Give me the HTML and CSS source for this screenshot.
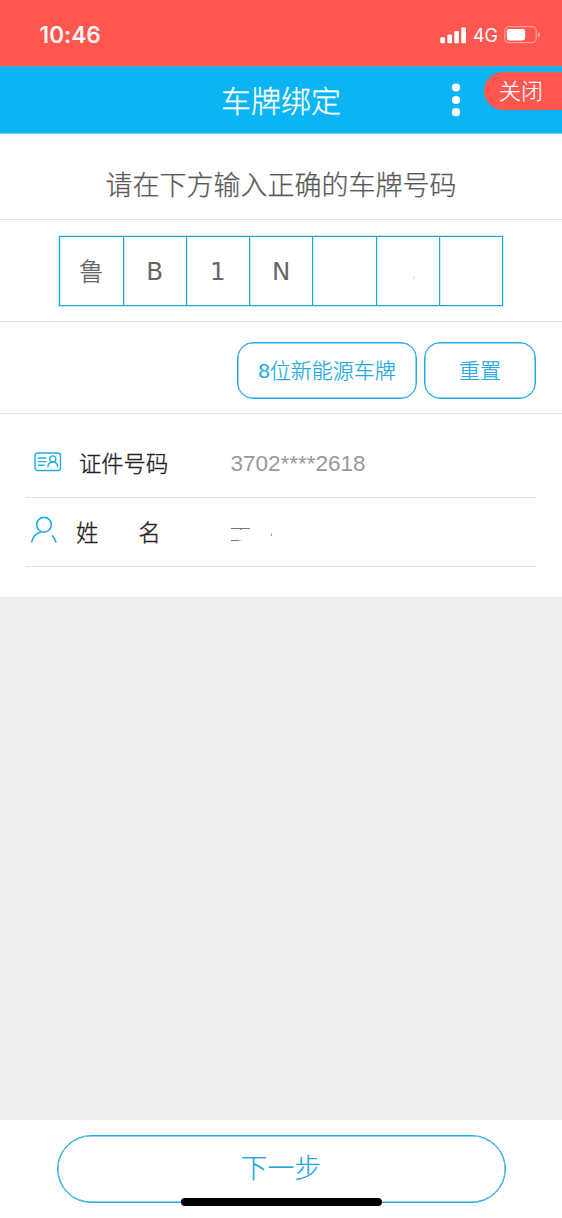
FILE: index.html
```html
<!DOCTYPE html>
<html lang="zh-CN">
<head>
<meta charset="utf-8">
<title>车牌绑定</title>
<link rel="stylesheet" href="styles.css">
</head>
<body>
<div class="app">
  <div class="status">
    <span class="time">10:46</span>
    <span class="indicators">
      <svg class="signal" width="27" height="17" viewBox="0 0 27 17" fill="#fff"><rect x="0.3" y="10.2" width="4.7" height="6" rx="1.3"/><rect x="7.3" y="7.5" width="4.7" height="8.7" rx="1.3"/><rect x="14.3" y="4" width="4.7" height="12.2" rx="1.3"/><rect x="21.3" y="0.5" width="4.7" height="15.7" rx="1.3"/></svg>
      <span class="network">4G</span>
      <svg class="battery" width="37" height="18" viewBox="0 0 37 18"><rect x="0.7" y="0.7" width="31.6" height="16" rx="4.5" fill="none" stroke="#ff9a97" stroke-width="1.3"/><rect x="2.8" y="2.9" width="18.4" height="11.6" rx="2.4" fill="#fff"/><path d="M34 6.2q2 .8 2 2.5t-2 2.5z" fill="#ffb0ad"/></svg>
    </span>
  </div>
  <header class="header">
    <h1 class="title">车牌绑定</h1>
    <svg class="more" width="10" height="34" viewBox="0 0 10 34" fill="#fff"><circle cx="5" cy="4.5" r="4.1"/><circle cx="5" cy="17" r="4.1"/><circle cx="5" cy="29.2" r="4.1"/></svg>
    <button class="close">关闭</button>
  </header>
  <p class="prompt">请在下方输入正确的车牌号码</p>
  <section class="plate-section">
    <div class="plate">
      <span class="cell cjk">鲁</span><span class="cell">B</span><span class="cell">1</span><span class="cell">N</span><span class="cell"></span><span class="cell"><svg class="speck" width="2" height="4"><path d="M1.3.5v1L.5 3" stroke="#bbb" stroke-width=".7" fill="none"/></svg></span><span class="cell"></span>
    </div>
  </section>
  <section class="actions">
    <button class="pill energy"><span class="digit">8</span>位新能源车牌</button>
    <button class="pill reset">重置</button>
  </section>
  <section class="form">
    <div class="row row-id">
      <svg class="icon-id" width="28" height="20" viewBox="0 0 28 20" fill="none" stroke="#22ade3" stroke-width="1.4" stroke-linecap="round"><rect x="1" y="1" width="25.5" height="17.5" rx="2.6"/><path d="M4.2 6h7.6M4.2 9.6h7.6M4.2 13.2h6M13.9 14.8q.4-4.6 4.9-5 4.5.4 4.9 5"/><circle cx="18.8" cy="6.9" r="3"/></svg>
      <span class="label">证件号码</span>
      <span class="value">3702****2618</span>
    </div>
    <div class="row row-name">
      <svg class="icon-user" width="28" height="28" viewBox="0 0 28 28" fill="none" stroke="#22ade3" stroke-width="1.6"><circle cx="14" cy="8.8" r="7.4"/><path d="M1.6 26.5q1.2-8.2 9.4-10.5M22 19.3q3.3 3 4 7.2"/></svg>
      <span class="label name"><span>姓</span><span>名</span></span>
      <svg class="redacted" width="44" height="18" viewBox="0 0 44 18" fill="none" stroke="#777"><path d="M0 2.5h19M0 14.5h8" stroke-width="1"/><path d="M8 14.5h3" stroke="#ddd"/><path d="M9 3.3h2M40.5 7.5v1.5l-.5 1" stroke-width=".8"/></svg>
    </div>
  </section>
  <main class="blank"></main>
  <footer class="footer">
    <button class="next">下一步</button>
    <div class="home-bar"></div>
  </footer>
</div>
</body>
</html>
```
FILE: styles.css
```css
* { box-sizing: border-box; }
body { margin: 0; font-family: "Liberation Sans", "Noto Sans CJK SC", sans-serif; background: #fff; }
button { font: inherit; margin: 0; padding: 0; background: #fff; }
.app { width: 562px; height: 1218px; display: flex; flex-direction: column; overflow: hidden; }
.status { height: 66px; flex: none; background: #ff5650; color: #fff; display: flex; align-items: center; justify-content: space-between; padding: 4px 21px 0 39.5px; }
.time { font: 500 23px/28px Inter, sans-serif; letter-spacing: .1px; -webkit-text-stroke: .2px #fff; }
.indicators { display: flex; align-items: center; }
.network { font: 400 18px/20px Inter, sans-serif; margin: 2px 6px 0 6px; }
.header { height: 68px; flex: none; background: #0bb5f3; border-bottom: 1px solid #6fd3f7; border-top: 1px solid #4aa5cc; display: flex; align-items: flex-start; color: #fff; }
.title { margin: 12px 0 0 221px; width: 230px; font-size: 30px; line-height: 46px; font-weight: 300; -webkit-text-stroke: .3px; }
.more { margin-top: 16px; }
.close { margin: 5px 0 0 23px; width: 78px; height: 38px; border: 0; border-radius: 19px 0 0 19px; background: #ff5650; color: #fff; font-size: 22px; line-height: 38px; font-weight: 300; text-align: left; padding: 1px 0 0 15px; -webkit-text-stroke: .2px; }
.prompt { height: 86px; flex: none; margin: 0; padding-top: 12px; border-bottom: 1px solid #e4e4e4; color: #595959; font-size: 27px; line-height: 80px; font-weight: 300; text-align: center; -webkit-text-stroke: .25px; }
.plate-section { height: 102px; flex: none; border-bottom: 1px solid #e4e4e4; padding: 16px 59px 0; }
.plate { height: 70px; width: 444px; display: grid; grid-template-columns: 62.5px repeat(6, 1fr); border: 1px solid #22a7d5; box-shadow: 0 0 0 .7px #a9e8fa; }
.cell { display: flex; align-items: center; justify-content: center; border-left: 1px solid #22a7d5; box-shadow: 1px 0 0 #c4f0fc inset; color: #666; padding: 2px 0 0; font: 24.5px/36px "DejaVu Sans", "Noto Sans", sans-serif; }
.cell:first-child { border-left: 0; }
.cell.cjk { font-family: "Noto Sans CJK SC", sans-serif; font-weight: 300; padding-top: 0; -webkit-text-stroke: .3px; }
.speck { margin: 12px 0 0 13px; }
.actions { height: 92px; flex: none; border-bottom: 1px solid #e4e4e4; display: flex; justify-content: flex-end; gap: 7px; padding: 20px 26px 0; }
.pill { height: 57px; border: 1.5px solid #22a9df; box-shadow: inset 0 0 0 .5px #22a9df; border-radius: 16px; color: #22a9df; font-size: 21px; font-weight: 300; padding-bottom: 4px; -webkit-text-stroke: .25px; }
.digit { font-family: "Liberation Sans", sans-serif; font-weight: 400; -webkit-text-stroke: 0; }
.energy { width: 180px; }
.reset { width: 112px; }
.form { height: 183px; flex: none; padding: 15px 26px 0; }
.row { height: 69px; border-bottom: 1px solid #e4e4e4; display: flex; align-items: center; }
.icon-id { margin: -3px 17px 0 8px; }
.label { width: 151.5px; padding-top: 3px; color: #222; font-size: 22.3px; line-height: 32px; font-weight: 300; -webkit-text-stroke: .35px; }
.value { color: #999; font-size: 22.5px; padding-top: 2px; }
.icon-user { margin: -4px 18px 0 4px; }
.name { width: 154px; display: flex; gap: 40px; }
.redacted { margin: 5px 0 0 1px; }
.blank { flex: 1; background: #eee; }
.footer { height: 98px; flex: none; display: flex; justify-content: center; padding-top: 15px; position: relative; }
.next { width: 449px; height: 68px; border: 1.5px solid #22a9df; box-shadow: inset 0 0 0 .5px #22a9df; border-radius: 34px; color: #22a9df; font-size: 27px; font-weight: 300; padding-bottom: 5px; -webkit-text-stroke: .2px; }
.home-bar { position: absolute; left: 181px; top: 78px; width: 201px; height: 8px; border-radius: 4px; background: #000; }
```
